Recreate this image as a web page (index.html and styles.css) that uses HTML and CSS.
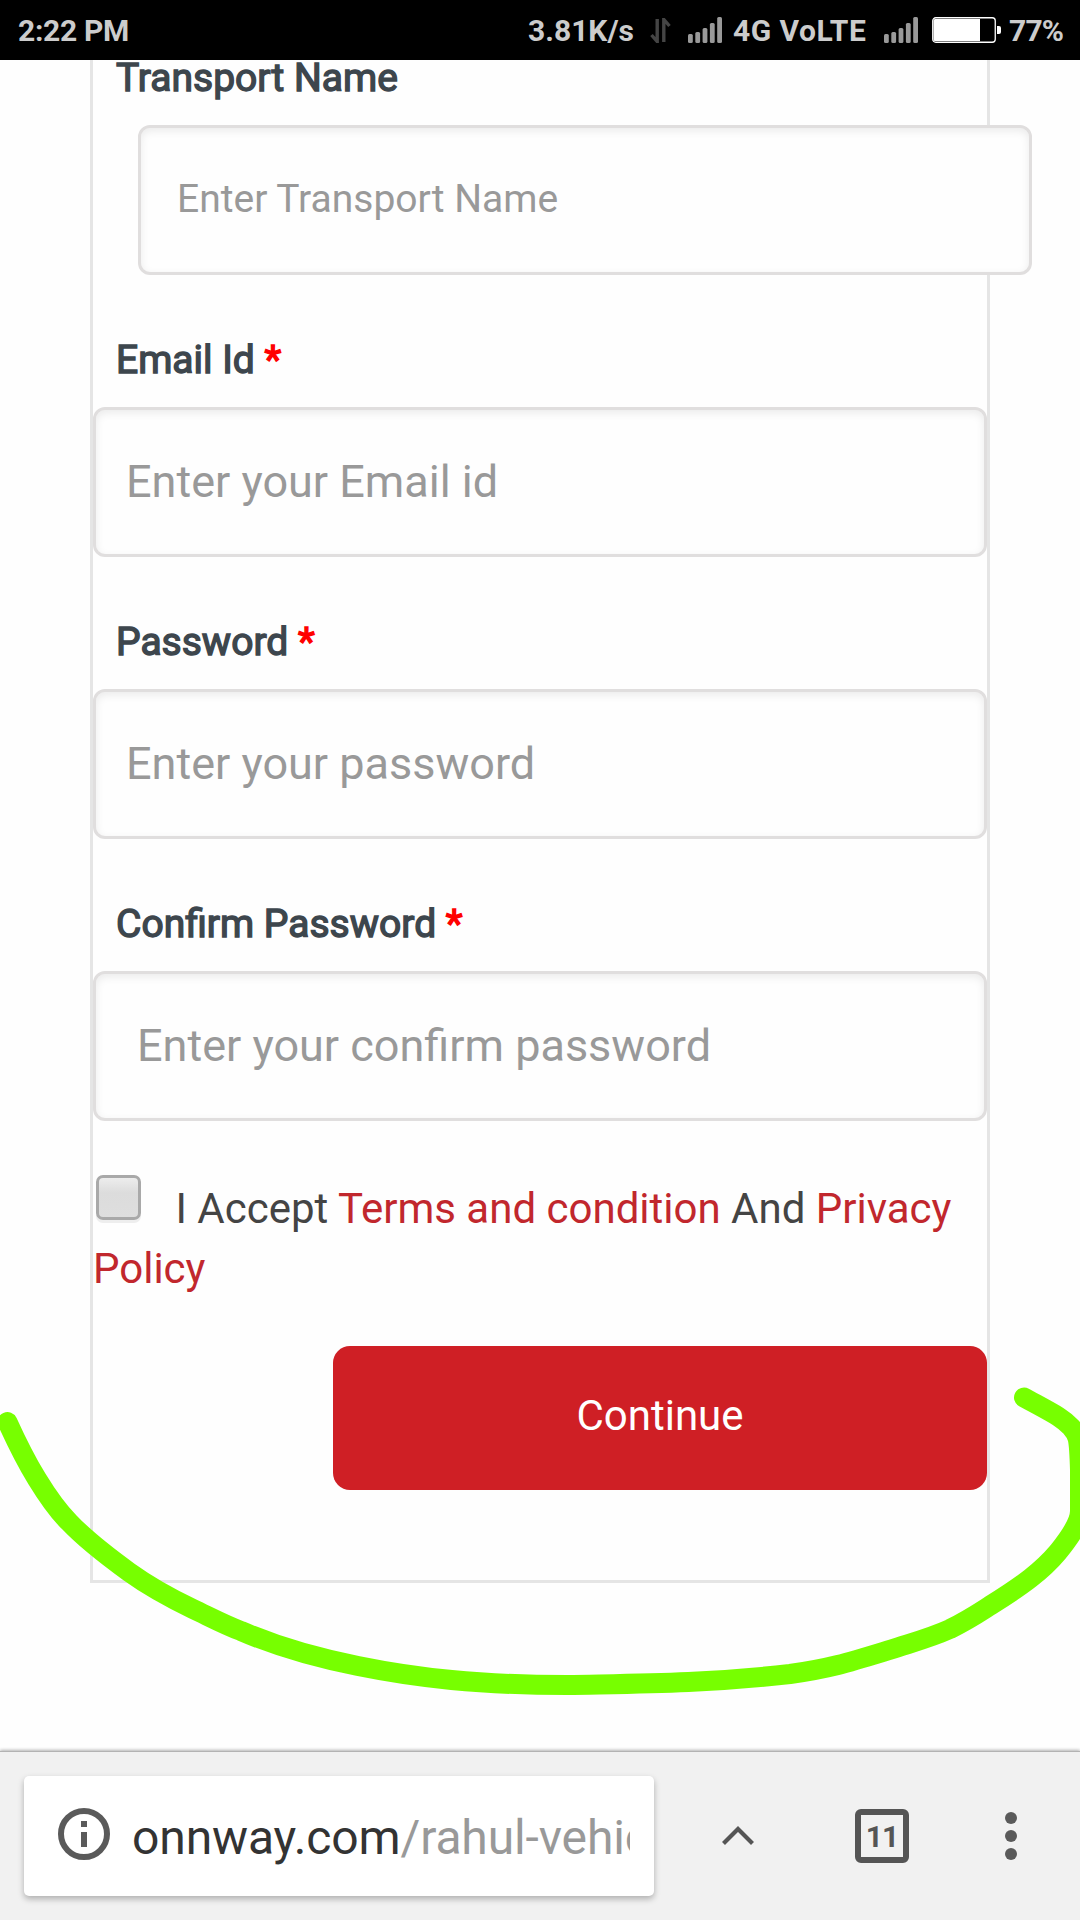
FILE: index.html
```html
<!DOCTYPE html>
<html lang="en">
<head>
<meta charset="utf-8">
<title>Onnway registration</title>
<link rel="stylesheet" href="styles.css">
</head>
<body>
<header class="status">
  <span class="clock">2:22 PM</span>
  <span class="speed">3.81K/s</span>
  <span class="arrows"><svg width="21" height="25" viewBox="0 0 21 25" fill="none" stroke="#454545" stroke-width="3.4"><path d="M7.2 1v22.500L1.500 17"/><path d="M13.800 24V1.500L19.500 8"/></svg></span>
  <span class="signal"><svg width="34" height="26" viewBox="0 0 34 26" fill="#999"><rect x="0" y="17" width="4.800" height="9" rx="1.500"/><rect x="7.300" y="15" width="4.800" height="11" rx="1.500"/><rect x="14.600" y="11" width="4.800" height="15" rx="1.500"/><rect x="21.900" y="6" width="4.800" height="20" rx="1.500"/><rect x="29.200" y="0" width="4.800" height="26" rx="1.500"/></svg></span>
  <span class="network">4G VoLTE</span>
  <span class="signal second"><svg width="34" height="26" viewBox="0 0 34 26" fill="#999"><rect x="0" y="17" width="4.800" height="9" rx="1.500"/><rect x="7.300" y="15" width="4.800" height="11" rx="1.500"/><rect x="14.600" y="11" width="4.800" height="15" rx="1.500"/><rect x="21.900" y="6" width="4.800" height="20" rx="1.500"/><rect x="29.200" y="0" width="4.800" height="26" rx="1.500"/></svg></span>
  <span class="battery"><svg width="70" height="26" viewBox="0 0 70 26"><rect x=".75" y=".75" width="62.500" height="24.500" rx="3" fill="none" stroke="#fff" stroke-width="1.300"/><path d="M3 2h45v22H3a1.500 1.500 0 0 1-1.500-1.500v-19A1.500 1.500 0 0 1 3 2z" fill="#fff"/><path d="M65 9h2a2 2 0 0 1 2 2v4a2 2 0 0 1-2 2h-2z" fill="#fff"/></svg></span>
  <span class="percent">77%</span>
</header>
<main class="page">
  <form class="card">
    <div class="field">
      <label for="transport">Transport Name</label>
      <input class="offset" id="transport" type="text" placeholder="Enter Transport Name">
    </div>
    <div class="field">
      <label for="email">Email Id <b>*</b></label>
      <input id="email" type="text" placeholder="Enter your Email id">
    </div>
    <div class="field">
      <label for="password">Password <b>*</b></label>
      <input id="password" type="password" placeholder="Enter your password">
    </div>
    <div class="field">
      <label for="confirm">Confirm Password <b>*</b></label>
      <input class="indent" id="confirm" type="password" placeholder="Enter your confirm password">
    </div>
    <p class="terms"><input class="check" type="checkbox" aria-label="Accept">I Accept <a>Terms and condition</a> And <a>Privacy Policy</a></p>
    <button class="continue" type="button">Continue</button>
  </form>
</main>
<footer class="toolbar">
  <div class="url">
    <svg width="52" height="52" viewBox="0 0 52 52"><circle cx="26" cy="26" r="23" fill="none" stroke="#5a5a5a" stroke-width="6"/><path d="M23 13h6v6h-6zM23 24h6v15h-6z" fill="#5a5a5a"/></svg>
    <span class="address">onnway.com<i>/rahul-vehic</i></span>
  </div>
  <svg class="up" width="32" height="20" viewBox="0 0 32 20"><path d="M1.500 17.500L16 3l14.500 14.500" fill="none" stroke="#555" stroke-width="4.200"/></svg>
  <span class="tabs">11</span>
  <svg class="menu" width="12" height="48" viewBox="0 0 12 48" fill="#5a5a5a"><circle cx="6" cy="6" r="6"/><circle cx="6" cy="24" r="6"/><circle cx="6" cy="42" r="6"/></svg>
</footer>
<svg class="marker" width="1080" height="1920" viewBox="0 0 1080 1920"><path d="M7.500 1422C17 1443 26 1461 37 1479C48 1497 58 1511 69 1522C86 1540 107 1556 129 1572C147 1585 168 1597 193 1609C210 1617 225 1625 241 1631C278 1647 317 1658 358 1666C417 1678 479 1685 567 1685C640 1683.500 700 1684 790 1674C832 1668 850 1662 891 1649.500C914 1642 930 1638 950 1629C970 1619 980 1612 991 1605C1023 1585 1042 1571 1058 1552C1070 1537 1080 1523 1080 1511V1470C1079 1436 1078 1435 1071 1427C1061 1417 1056 1415 1024 1397.500"/></svg>
</body>
</html>
```
FILE: styles.css
```css
* { box-sizing: border-box; }
html, body { margin: 0; }
body {
  width: 1080px;
  height: 1920px;
  display: flex;
  flex-direction: column;
  position: relative;
  overflow: hidden;
  background: #fefefe;
  font-family: Roboto, "Liberation Sans", sans-serif;
}
svg { display: block; }

/* Phone status bar */
.status {
  height: 60px;
  flex: none;
  display: flex;
  align-items: center;
  background: #000;
  color: #ccc;
  font-size: 30px;
  font-weight: 700;
  line-height: 60px;
  white-space: pre;
  padding-left: 18px;
}
.clock, .speed, .network, .percent { padding-top: 1px; }
.clock { flex: 1; letter-spacing: -.3px; }
.speed { width: 122px; }
.arrows { width: 38px; }
.signal { width: 45px; }
.network { width: 151px; letter-spacing: .5px; }
.signal.second { width: 48px; }
.battery { width: 77px; }
.percent { width: 71px; letter-spacing: -.8px; }

/* Registration form */
.page { height: 1691px; flex: none; padding: 0 90px; }
.card {
  height: 1523px;
  border: 3px solid #e5e5e5;
  border-top: 0;
  display: flex;
  flex-direction: column;
}
.field { height: 282px; flex: none; }
.field:first-child { height: 215px; }
.field:first-child label { height: 65px; padding-top: 0; line-height: 36px; }
label {
  display: block;
  height: 132px;
  padding: 66px 0 0 23px;
  color: #3d464d;
  font-size: 39px;
  line-height: 38px;
  -webkit-text-stroke: 1.4px currentColor;
}
label b { color: #f00; font-weight: 400; }
.field input {
  display: block;
  width: 894px;
  height: 150px;
  margin: 0;
  padding: 0 30px 2px;
  border: 3px solid #e0dede;
  border-radius: 12px;
  outline: 0;
  background: #fefefe;
  box-shadow: inset 0 3px 9px rgba(0, 0, 0, .08);
  font: 45px Roboto, "Liberation Sans", sans-serif;
}
.field input.offset { margin-left: 45px; padding: 0 36px 2px; font-size: 39px; }
.field input.indent { padding-left: 41px; }
.field input::placeholder { color: #999; opacity: 1; }

.terms {
  margin: 54px 0 0;
  color: #444;
  font-size: 42px;
  line-height: 60px;
}
.terms a { color: #c1272d; }
.check {
  appearance: none;
  width: 45px;
  height: 45px;
  margin: 0 34.5px 0 3px;
  vertical-align: 3px;
  border: 3px solid #a9a9a9;
  border-radius: 7px;
  background: linear-gradient(#ededed, #dcdcdc 38%, #dedede);
  box-shadow: 0 3px 0 #eee;
}
.continue {
  width: 654px;
  height: 144px;
  margin: 47px 0 0 auto;
  border: 0;
  border-radius: 17px;
  background: #cf1f25;
  color: #fff;
  font: 42px/138px Roboto, "Liberation Sans", sans-serif;
  padding: 0 0 5px;
}

/* Browser toolbar */
.toolbar {
  height: 169px;
  flex: none;
  display: flex;
  align-items: center;
  padding: 0 63px 0 24px;
  background: #f1f1f1;
  box-shadow: 0 -1px 3px rgba(0, 0, 0, .3);
  border-top: 1px solid #b3b3b3;
}
.url {
  width: 630px;
  height: 120px;
  display: flex;
  align-items: center;
  gap: 22px;
  padding: 0 24px 4px 34px;
  border-radius: 5px;
  background: #fff;
  box-shadow: 0 3px 6px rgba(0, 0, 0, .28);
}
.address {
  flex: 1;
  overflow: hidden;
  white-space: nowrap;
  color: #333;
  font-size: 48px;
  line-height: 64px;
  letter-spacing: -.12px;
  padding-top: 7px;
}
.address i { color: #999; font-style: normal; }
.up { margin-left: 68px; }
.tabs {
  width: 54px;
  height: 54px;
  margin-left: 101px;
  border: 6px solid #555;
  border-radius: 6px;
  color: #555;
  font-size: 30px;
  font-weight: 700;
  line-height: 43px;
  letter-spacing: -1px;
  text-align: center;
}
.menu { margin-left: 96px; }

/* Hand-drawn highlight over the page */
.marker {
  position: absolute;
  left: 0;
  top: 0;
  pointer-events: none;
  fill: none;
  stroke: #7f0;
  stroke-width: 20;
  stroke-linecap: round;
  stroke-linejoin: round;
}
```
